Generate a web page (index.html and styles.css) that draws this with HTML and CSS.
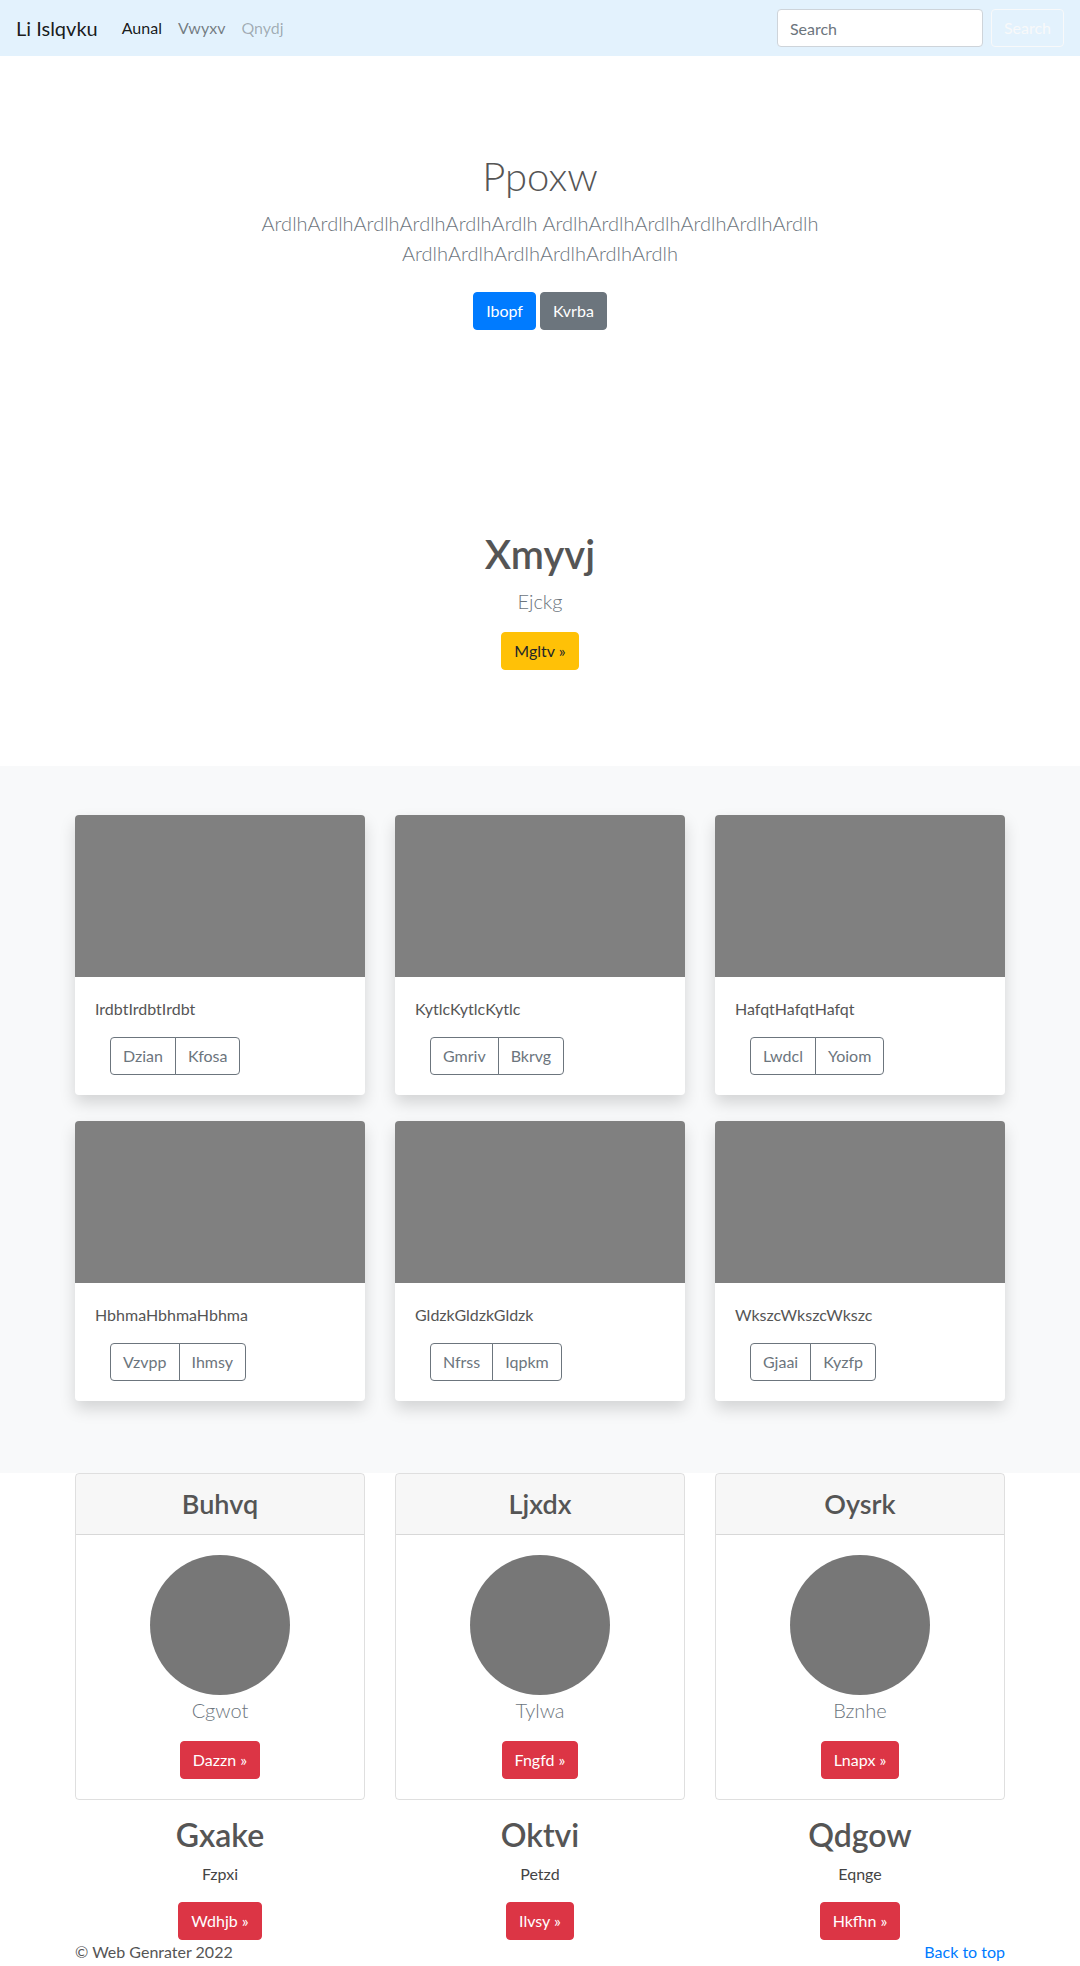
FILE: index.html
```html
<!DOCTYPE html>
<html lang="en">
<head>
<meta charset="utf-8">
<title>Li Islqvku</title>
<link rel="stylesheet" href="styles.css">
</head>
<body>
<header class="navbar">
  <a class="brand" href="#">Li Islqvku</a>
  <nav class="nav-links">
    <a class="nav-link active" href="#">Aunal</a>
    <a class="nav-link" href="#">Vwyxv</a>
    <a class="nav-link disabled" href="#">Qnydj</a>
  </nav>
  <form class="search-form">
    <input class="search-input" type="search" placeholder="Search">
    <button class="btn btn-outline-light" type="button">Search</button>
  </form>
</header>

<main>
  <section class="jumbotron">
    <div class="jumbo-inner">
      <h1 class="jumbo-title">Ppoxw</h1>
      <p class="lead muted">ArdlhArdlhArdlhArdlhArdlhArdlh ArdlhArdlhArdlhArdlhArdlhArdlh ArdlhArdlhArdlhArdlhArdlhArdlh</p>
      <p class="jumbo-actions"><a class="btn btn-primary" href="#">Ibopf</a> <a class="btn btn-secondary" href="#">Kvrba</a></p>
    </div>
  </section>

  <section class="feature">
    <h1 class="feature-title">Xmyvj</h1>
    <p class="lead muted feature-lead">Ejckg</p>
    <p class="flush"><a class="btn btn-warning" href="#">Mgltv &raquo;</a></p>
  </section>

  <section class="album">
    <div class="container grid3 album-grid">
      <div class="album-card">
        <div class="thumb"></div>
        <div class="album-body">
          <p class="card-text">IrdbtIrdbtIrdbt</p>
          <div class="btn-group"><a class="btn btn-outline-secondary" href="#">Dzian</a><a class="btn btn-outline-secondary" href="#">Kfosa</a></div>
        </div>
      </div>
      <div class="album-card">
        <div class="thumb"></div>
        <div class="album-body">
          <p class="card-text">KytlcKytlcKytlc</p>
          <div class="btn-group"><a class="btn btn-outline-secondary" href="#">Gmriv</a><a class="btn btn-outline-secondary" href="#">Bkrvg</a></div>
        </div>
      </div>
      <div class="album-card">
        <div class="thumb"></div>
        <div class="album-body">
          <p class="card-text">HafqtHafqtHafqt</p>
          <div class="btn-group"><a class="btn btn-outline-secondary" href="#">Lwdcl</a><a class="btn btn-outline-secondary" href="#">Yoiom</a></div>
        </div>
      </div>
      <div class="album-card">
        <div class="thumb"></div>
        <div class="album-body">
          <p class="card-text">HbhmaHbhmaHbhma</p>
          <div class="btn-group"><a class="btn btn-outline-secondary" href="#">Vzvpp</a><a class="btn btn-outline-secondary" href="#">Ihmsy</a></div>
        </div>
      </div>
      <div class="album-card">
        <div class="thumb"></div>
        <div class="album-body">
          <p class="card-text">GldzkGldzkGldzk</p>
          <div class="btn-group"><a class="btn btn-outline-secondary" href="#">Nfrss</a><a class="btn btn-outline-secondary" href="#">Iqpkm</a></div>
        </div>
      </div>
      <div class="album-card">
        <div class="thumb"></div>
        <div class="album-body">
          <p class="card-text">WkszcWkszcWkszc</p>
          <div class="btn-group"><a class="btn btn-outline-secondary" href="#">Gjaai</a><a class="btn btn-outline-secondary" href="#">Kyzfp</a></div>
        </div>
      </div>
    </div>
  </section>

  <section class="container grid3 profiles">
    <div class="profile-card">
      <div class="profile-header"><h4 class="profile-title">Buhvq</h4></div>
      <div class="profile-body">
        <div class="avatar"></div>
        <p class="lead muted profile-name">Cgwot</p>
        <p class="flush"><a class="btn btn-danger" href="#">Dazzn &raquo;</a></p>
      </div>
    </div>
    <div class="profile-card">
      <div class="profile-header"><h4 class="profile-title">Ljxdx</h4></div>
      <div class="profile-body">
        <div class="avatar"></div>
        <p class="lead muted profile-name">Tylwa</p>
        <p class="flush"><a class="btn btn-danger" href="#">Fngfd &raquo;</a></p>
      </div>
    </div>
    <div class="profile-card">
      <div class="profile-header"><h4 class="profile-title">Oysrk</h4></div>
      <div class="profile-body">
        <div class="avatar"></div>
        <p class="lead muted profile-name">Bznhe</p>
        <p class="flush"><a class="btn btn-danger" href="#">Lnapx &raquo;</a></p>
      </div>
    </div>
  </section>

  <section class="container grid3 marketing">
    <div class="mk-col">
      <h2 class="mk-title">Gxake</h2>
      <p class="mk-text">Fzpxi</p>
      <p class="flush"><a class="btn btn-danger" href="#">Wdhjb &raquo;</a></p>
    </div>
    <div class="mk-col">
      <h2 class="mk-title">Oktvi</h2>
      <p class="mk-text">Petzd</p>
      <p class="flush"><a class="btn btn-danger" href="#">Ilvsy &raquo;</a></p>
    </div>
    <div class="mk-col">
      <h2 class="mk-title">Qdgow</h2>
      <p class="mk-text">Eqnge</p>
      <p class="flush"><a class="btn btn-danger" href="#">Hkfhn &raquo;</a></p>
    </div>
  </section>
</main>

<footer class="container footer">
  <p class="copy">&copy; Web Genrater 2022</p>
  <p class="copy"><a class="top-link" href="#">Back to top</a></p>
</footer>
</body>
</html>
```

FILE: styles.css
```css
* { box-sizing: border-box; }

html, body {
  margin: 0;
  padding: 0;
  background: #fff;
}

body {
  font-family: "Lato", "Liberation Sans", sans-serif;
  font-size: 16px;
  line-height: 1.5;
  color: #555;
}

a { text-decoration: none; }
p { margin: 0 0 16px; }
h1, h2, h4 { margin: 0 0 8px; color: #555; }

/* Navbar */
.navbar {
  display: flex;
  align-items: center;
  height: 56px;
  padding: 8px 16px;
  background: #e3f2fd;
}
.brand {
  font-size: 20px;
  line-height: 30px;
  padding: 5px 0;
  margin-right: 16px;
  color: rgba(0, 0, 0, 0.9);
}
.nav-links { display: flex; }
.nav-link {
  padding: 8px;
  color: rgba(0, 0, 0, 0.5);
}
.nav-link.active { color: rgba(0, 0, 0, 0.9); }
.nav-link.disabled { color: rgba(0, 0, 0, 0.3); }
.search-form {
  margin-left: auto;
  display: flex;
  align-items: center;
}
.search-input {
  width: 206px;
  height: 38px;
  padding: 6px 12px;
  margin-right: 8px;
  font: inherit;
  color: #495057;
  background: #fff;
  border: 1px solid #ced4da;
  border-radius: 4px;
}
.search-input::placeholder { color: #6c757d; }

/* Buttons */
.btn {
  display: inline-block;
  font-family: inherit;
  font-size: 16px;
  line-height: 24px;
  padding: 6px 12px;
  border: 1px solid transparent;
  border-radius: 4px;
  text-align: center;
  vertical-align: middle;
  background: transparent;
}
.btn-primary { background: #007bff; border-color: #007bff; color: #fff; }
.btn-secondary { background: #6c757d; border-color: #6c757d; color: #fff; }
.btn-warning { background: #ffc107; border-color: #ffc107; color: #212529; }
.btn-danger { background: #dc3545; border-color: #dc3545; color: #fff; }
.btn-outline-light { border-color: #f8f9fa; color: #f8f9fa; }
.btn-outline-secondary { border-color: #6c757d; color: #6c757d; }

.btn-group { display: inline-flex; margin-left: 15px; }
.btn-group .btn:first-child { border-top-right-radius: 0; border-bottom-right-radius: 0; }
.btn-group .btn + .btn { margin-left: -1px; border-top-left-radius: 0; border-bottom-left-radius: 0; }

/* Text helpers */
.lead { font-size: 20px; line-height: 30px; font-weight: 300; }
.muted { color: #6c757d; }
.flush { margin: 0; }

/* Jumbotron */
.jumbotron {
  padding: 96px 15px;
  text-align: center;
}
.jumbo-inner { max-width: 610px; margin: 0 auto; }
.jumbo-title {
  font-size: 40px;
  line-height: 48px;
  font-weight: 300;
}
.jumbo-actions { margin-bottom: 16px; }
.jumbo-actions .btn { margin: 8px 0; }

/* Feature */
.feature {
  padding: 80px 15px 96px;
  text-align: center;
}
.feature-title {
  font-size: 40px;
  line-height: 48px;
  font-weight: 600;
}

/* Layout */
.container {
  width: 960px;
  margin: 0 auto;
  padding: 0 15px;
}
.grid3 {
  display: grid;
  grid-template-columns: repeat(3, 1fr);
  column-gap: 30px;
}

/* Album */
.album {
  background: #f8f9fa;
  padding: 49px 0 72px;
}
.album-grid { row-gap: 26px; }
.album-card {
  background: #fff;
  border-radius: 4px;
  overflow: hidden;
  box-shadow: 0 8px 16px rgba(0, 0, 0, 0.15);
}
.thumb { height: 162px; background: #808080; }
.album-body { padding: 20px; }
.card-text { margin-bottom: 16px; }

/* Profiles */
.profile-card {
  border: 1px solid rgba(0, 0, 0, 0.125);
  border-radius: 4px;
  margin-bottom: 16px;
  text-align: center;
  overflow: hidden;
}
.profile-header {
  background: rgba(0, 0, 0, 0.03);
  border-bottom: 1px solid rgba(0, 0, 0, 0.125);
  padding: 12px 20px;
}
.profile-title {
  margin: 0;
  font-size: 27px;
  line-height: 36px;
  font-weight: 600;
}
.profile-body { padding: 20px; }
.avatar {
  width: 140px;
  height: 140px;
  border-radius: 50%;
  background: #777;
  margin: 0 auto;
}

/* Marketing */
.marketing { text-align: center; }
.mk-title {
  font-size: 32px;
  line-height: 38px;
  font-weight: 600;
}
.mk-text { color: #444; }

/* Footer */
.footer {
  display: flex;
  justify-content: space-between;
}
.copy { margin: 0; color: #555; }
.top-link { color: #007bff; }
```
